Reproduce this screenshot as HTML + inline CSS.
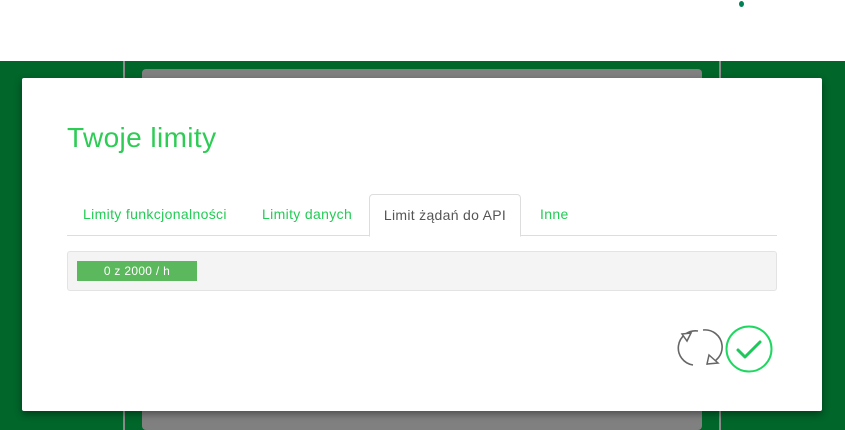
<!DOCTYPE html>
<html><head><meta charset="utf-8"><style>
body{margin:0;width:845px;height:430px;overflow:hidden;background:#fff;font-family:"Liberation Sans",sans-serif;position:relative}
.g{position:absolute;left:0;top:61px;width:845px;height:369px;background:#00662a}
.vl{position:absolute;top:61px;width:2px;height:369px;background:#8a8a8a}
.panel{position:absolute;left:142px;top:69px;width:560px;height:361px;background:#808080;border-radius:4px}
.modal{position:absolute;left:22px;top:78px;width:800px;height:333px;background:#fff;border-radius:2px;box-shadow:0 3px 8px rgba(0,0,0,.4)}
h1{position:absolute;left:45px;top:44px;margin:0;font-weight:normal;font-size:28px;color:#2ecc55;letter-spacing:0.4px}
.tabs{position:absolute;left:45px;top:116px;width:710px;height:41px;border-bottom:1px solid #ddd}
.t{position:absolute;top:12px;font-size:14px;color:#22cc55;letter-spacing:0.35px}
.act{position:absolute;left:302px;top:0;width:150px;height:41px;border:1px solid #ddd;border-bottom:1px solid #fff;border-radius:4px 4px 0 0;background:#fff;color:#555;font-size:14px;text-align:center;line-height:40px;letter-spacing:0.3px}
.well{position:absolute;left:45px;top:173px;width:708px;height:38px;background:#f4f4f4;border:1px solid #e3e3e3;border-radius:3px}
.bar{position:absolute;left:9px;top:9px;width:120px;height:20px;background:#5cb85c;color:#fff;font-size:12px;text-align:center;line-height:20px;letter-spacing:0.3px}
</style></head><body>
<div style="position:absolute;left:739px;top:1px;width:5px;height:6px;border-radius:50%;background:#008055"></div>
<div class="g"></div>
<div class="vl" style="left:123px"></div>
<div class="vl" style="left:719px"></div>
<div class="panel"></div>
<div class="modal">
<h1>Twoje limity</h1>
<div class="tabs">
<span class="t" style="left:16px">Limity funkcjonalności</span>
<span class="t" style="left:195px">Limity danych</span>
<div class="act">Limit żądań do API</div>
<span class="t" style="left:473px">Inne</span>
</div>
<div class="well"><div class="bar">0 z 2000 / h</div></div>
<svg style="position:absolute;left:655px;top:248px" width="46" height="44" viewBox="0 0 46 44">
<path d="M21 5 A17 17 0 0 0 16 39" fill="none" stroke="#666" stroke-width="1.6"/>
<path d="M26 4 A17 17 0 0 1 30 38" fill="none" stroke="#666" stroke-width="1.6"/>
<path d="M5 8 L14 7 L10 15 Z" fill="#fff" stroke="#666" stroke-width="1.5"/>
<path d="M32 29 L30 38 L41 37 Z" fill="#fff" stroke="#666" stroke-width="1.5"/>
</svg>
<svg style="position:absolute;left:703px;top:247px" width="48" height="48" viewBox="0 0 48 48">
<circle cx="24" cy="24" r="22.5" fill="none" stroke="#1ed760" stroke-width="2"/>
<path d="M13 25 L20 32 L35 17" fill="none" stroke="#1ec75a" stroke-width="3" stroke-linecap="round" stroke-linejoin="round"/>
</svg>
</div>
</body></html>
